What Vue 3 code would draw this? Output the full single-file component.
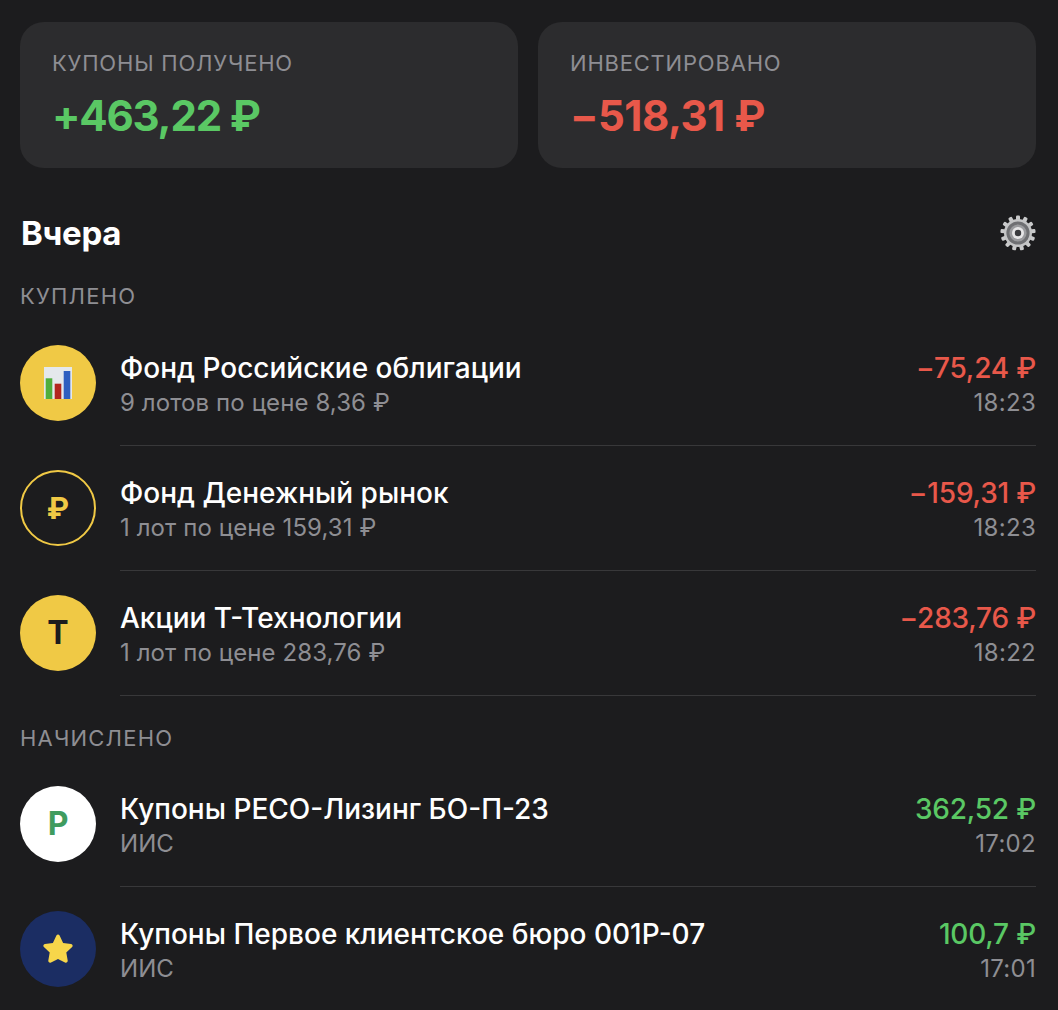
<script setup>
const bought = [
  { id: 1, icon: 'chart', title: 'Фонд Российские облигации', sub: '9 лотов по цене 8,36 ₽', amount: '−75,24 ₽', time: '18:23', tone: 'neg' },
  { id: 2, icon: 'rub', title: 'Фонд Денежный рынок', sub: '1 лот по цене 159,31 ₽', amount: '−159,31 ₽', time: '18:23', tone: 'neg' },
  { id: 3, icon: 't', title: 'Акции Т-Технологии', sub: '1 лот по цене 283,76 ₽', amount: '−283,76 ₽', time: '18:22', tone: 'neg' },
]
const accrued = [
  { id: 4, icon: 'p', title: 'Купоны РЕСО-Лизинг БО-П-23', sub: 'ИИС', amount: '362,52 ₽', time: '17:02', tone: 'pos' },
  { id: 5, icon: 'star', title: 'Купоны Первое клиентское бюро 001Р-07', sub: 'ИИС', amount: '100,7 ₽', time: '17:01', tone: 'pos' },
]
const sections = [
  { label: 'КУПЛЕНО', rows: bought },
  { label: 'НАЧИСЛЕНО', rows: accrued },
]
const teeth = Array.from({ length: 13 }, (_, i) => (i * 360) / 13)
</script>

<template>
  <div class="page">
    <div class="cards">
      <div class="card">
        <div class="card-label">КУПОНЫ ПОЛУЧЕНО</div>
        <div class="card-value pos">+463,22 ₽</div>
      </div>
      <div class="card">
        <div class="card-label">ИНВЕСТИРОВАНО</div>
        <div class="card-value neg">−518,31 ₽</div>
      </div>
    </div>

    <div class="head">
      <h2 class="title">Вчера</h2>
      <svg class="gear" width="36" height="36" viewBox="0 0 36 36">
        <rect v-for="a in teeth" :key="a" x="16" y="0.4" width="4" height="7" rx="1.2" fill="#c9cacb" :transform="`rotate(${a} 18 18)`" />
        <circle cx="18" cy="18" r="14" fill="#c4c5c6" />
        <circle cx="18" cy="18" r="11.6" fill="#6f7073" />
        <circle cx="18" cy="18" r="8.6" fill="#9a9b9e" />
        <circle cx="18" cy="18" r="6" fill="#e6e6e7" />
        <circle cx="18" cy="18" r="3.2" fill="#3a3b3e" />
      </svg>
    </div>

    <section v-for="s in sections" :key="s.label">
      <div class="section-label">{{ s.label }}</div>
      <div v-for="r in s.rows" :key="r.id" class="row">
        <div class="avatar" :class="'av-' + r.icon">
          <svg v-if="r.icon === 'chart'" width="28" height="32" viewBox="0 0 28 32">
            <rect width="28" height="32" fill="#e4e8ec" />
            <rect x="1.700" y="11.300" width="6.600" height="20.700" fill="#4fae3c" />
            <rect x="10.700" y="16.700" width="6.600" height="15.300" fill="#b3261e" />
            <rect x="19.700" y="4" width="6.600" height="28" fill="#2f5fc0" />
          </svg>
          <span v-else-if="r.icon === 'rub'" class="glyph glyph-rub">₽</span>
          <span v-else-if="r.icon === 't'" class="glyph">Т</span>
          <span v-else-if="r.icon === 'p'" class="glyph">Р</span>
          <svg v-else width="32" height="32" viewBox="0 0 32 32">
            <path d="M14.400 2.600c.7-1.400 2.500-1.400 3.200 0l3.500 7.300 8 1.100c1.500.2 2.100 2.100 1 3.100l-5.800 5.500 1.400 7.900c.3 1.500-1.300 2.700-2.700 2L16 26l-7 3.500c-1.400.7-3-.5-2.700-2l1.400-7.900-5.800-5.500c-1.100-1-.5-2.900 1-3.100l8-1.100z" fill="#f7d64a" />
          </svg>
        </div>
        <div class="body">
          <div class="main">
            <div class="name">{{ r.title }}</div>
            <div class="sub">{{ r.sub }}</div>
          </div>
          <div class="side">
            <div class="amount" :class="r.tone">{{ r.amount }}</div>
            <div class="sub time">{{ r.time }}</div>
          </div>
        </div>
      </div>
    </section>
  </div>
</template>

<style>
html, body { background: #1c1c1e; }
</style>

<style scoped>
.page {
  box-sizing: border-box;
  width: 1058px;
  height: 1010px;
  overflow: hidden;
  padding: 22px 22px 0 20px;
  background: #1c1c1e;
  font-family: Inter, "Noto Sans", sans-serif;
  color: #fff;
}
.cards { display: flex; gap: 20px; }
.card {
  flex: 1;
  height: 146px;
  box-sizing: border-box;
  padding: 28px 32px 0;
  background: #2c2c2e;
  border-radius: 24px;
}
.card-label {
  font-size: 22px;
  line-height: 26px;
  color: #8e8e93;
  letter-spacing: 0.8px;
}
.card-value {
  margin-top: 16px;
  font-size: 42px;
  line-height: 48px;
  font-weight: 700;
  letter-spacing: -1.2px;
}
.card-value.neg { letter-spacing: -0.5px; }
.pos { color: #5ac864; }
.neg { color: #e8584a; }
.head {
  display: flex;
  justify-content: space-between;
  align-items: center;
  height: 40px;
  margin-top: 45px;
  padding-left: 1px;
}
.title { margin: 0; font-size: 33px; line-height: 40px; font-weight: 700; letter-spacing: -0.3px; }
.gear { display: block; }
.section-label {
  height: 68px;
  padding-top: 30px;
  box-sizing: border-box;
  font-size: 22px;
  line-height: 26px;
  color: #8e8e93;
  letter-spacing: 1.2px;
}
section + section .section-label { height: 66px; padding-top: 29px; }
.row {
  display: flex;
  align-items: stretch;
  gap: 24px;
  height: 125px;
}
.avatar {
  flex: none;
  width: 76px;
  height: 76px;
  margin-top: 24px;
  box-sizing: border-box;
  border-radius: 50%;
  display: flex;
  align-items: center;
  justify-content: center;
}
.av-chart, .av-t { background: #f0c945; }
.av-rub { border: 2px solid #f0c945; color: #f0c945; }
.av-t { color: #1c1c1e; }
.av-p { background: #fff; color: #3f9c5f; }
.av-star { background: #1b2d63; }
.glyph { font-size: 32px; font-weight: 700; line-height: 1; }
.glyph-rub { font-size: 30px; }
.body {
  flex: 1;
  display: flex;
  justify-content: space-between;
  box-sizing: border-box;
  padding-top: 31px;
  border-bottom: 1px solid #38383a;
}
section:last-child .row:last-child .body { border-bottom: 0; }
.name, .amount {
  font-size: 28px;
  line-height: 32px;
  font-weight: 500;
}
.name { color: #fff; }
.amount { letter-spacing: -0.2px; }
.sub {
  margin-top: 3px;
  font-size: 24px;
  line-height: 32px;
  color: #8e8e93;
  letter-spacing: 0.1px;
}
.time { letter-spacing: 0.3px; }
.side { text-align: right; }
</style>
